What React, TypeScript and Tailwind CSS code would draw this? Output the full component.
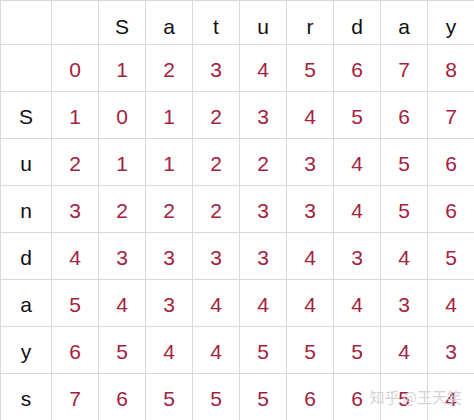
const word = ['S', 'a', 't', 'u', 'r', 'd', 'a', 'y']

const rows: { label: string; values: number[] }[] = [
  { label: 'S', values: [1, 0, 1, 2, 3, 4, 5, 6, 7] },
  { label: 'u', values: [2, 1, 1, 2, 2, 3, 4, 5, 6] },
  { label: 'n', values: [3, 2, 2, 2, 3, 3, 4, 5, 6] },
  { label: 'd', values: [4, 3, 3, 3, 3, 4, 3, 4, 5] },
  { label: 'a', values: [5, 4, 3, 4, 4, 4, 4, 3, 4] },
  { label: 'y', values: [6, 5, 4, 4, 5, 5, 5, 4, 3] },
  { label: 's', values: [7, 6, 5, 5, 5, 6, 6, 5, 4] },
]

function Cell({ children, red = false, top = false }: { children?: React.ReactNode; red?: boolean; top?: boolean }) {
  return (
    <div
      className={`flex justify-center border-r border-b border-[#d9d9d9] text-[21px] leading-none ${
        top ? 'items-end pb-[7px]' : 'items-center pt-[2px]'
      } ${red ? 'text-[#a5213d]' : 'text-[#111]'}`}
    >
      {children}
    </div>
  )
}

export default function App() {
  return (
    <div className="relative w-[474px] h-[420px] bg-white overflow-hidden" style={{ fontFamily: '"Liberation Sans", Arial, sans-serif' }}>
      <div className="grid grid-cols-[51px_repeat(9,47px)] grid-rows-[44px_repeat(8,47px)] border-t border-l border-[#d9d9d9]">
        {/* header word */}
        <Cell top />
        <Cell top />
        {word.map((ch, i) => (
          <Cell key={i} top>{ch}</Cell>
        ))}

        {/* first row of distances */}
        <Cell />
        {[0, 1, 2, 3, 4, 5, 6, 7, 8].map((n) => (
          <Cell key={n} red>{n}</Cell>
        ))}

        {rows.map((row) =>
          [
            <Cell key={row.label + '-l'}>{row.label}</Cell>,
            ...row.values.map((v, j) => (
              <Cell key={row.label + j} red>{v}</Cell>
            )),
          ]
        )}
      </div>

      {/* watermark */}
      <div
        className="absolute right-[12px] bottom-[12px] text-[15px] text-[#d0d0d0] opacity-90"
        style={{ fontFamily: '"Noto Sans CJK SC", sans-serif' }}
      >
        知乎 @王天笑
      </div>
    </div>
  )
}
